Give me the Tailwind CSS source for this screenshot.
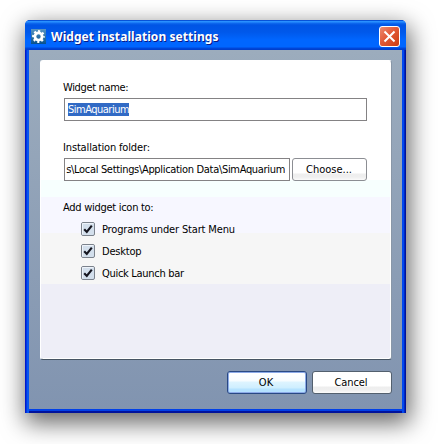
<!DOCTYPE html>
<html lang="en">
<head>
<meta charset="utf-8">
<title>Widget installation settings</title>
<script src="https://cdn.jsdelivr.net/npm/@tailwindcss/browser@4"></script>
</head>
<body class="bg-white w-[444px] h-[444px] overflow-hidden pl-[25px] pt-[20px] font-['DejaVu_Sans_Condensed','DejaVu_Sans',sans-serif] text-[11px] leading-[14px] text-black">
<main class="w-[381px] h-[393px] flex flex-col rounded-t-[5px] bg-[#0846e6] shadow-[2px_8px_23px_2px_rgba(0,0,0,0.6)]">
  <header class="h-[30px] shrink-0 flex items-center rounded-t-[5px] pl-[6px] pr-[6px] bg-[linear-gradient(180deg,#0753d8_0,#0753d8_1px,#2990ff_1px,#2990ff_2px,#106cf0_3px,#0055e5_5px,#0058ea_12px,#0066ff_20px,#0066ff_27px,#0048dc_28px,#003cc8_30px)]">
    <svg class="w-[15px] h-[15px] shrink-0 mt-[2px]" viewBox="0 0 15 15">
      <defs><linearGradient id="ic" x1="0" y1="0" x2="0" y2="1"><stop offset="0" stop-color="#5794c2"/><stop offset="1" stop-color="#07518c"/></linearGradient></defs>
      <rect width="15" height="15" fill="url(#ic)"/>
      <circle cx="7.5" cy="7.5" r="3.6" fill="none" stroke="#fff" stroke-width="2.8"/>
      <circle cx="7.5" cy="7.5" r="5.4" fill="none" stroke="#fff" stroke-width="2" stroke-dasharray="2.1 2.141" stroke-dashoffset="1.05"/>
    </svg>
    <h1 class="ml-[5px] mt-[4px] w-[200px] whitespace-nowrap font-['Noto_Sans','Open_Sans',sans-serif] font-bold text-[12px] leading-[18px] tracking-[0.06px] text-white [text-shadow:1px_1px_0_#0a1883]">Widget installation settings</h1>
    <button class="ml-auto mt-[3px] w-[21px] h-[21px] rounded-[3px] border border-white bg-[linear-gradient(135deg,#ec8a70,#e25a38_45%,#cc3c10)]" aria-label="Close">
      <svg class="w-[19px] h-[19px]" viewBox="0 0 19 19"><path d="M5.2 5.2 13.8 13.8M13.8 5.2 5.2 13.8" stroke="#fff" stroke-width="2" stroke-linecap="square"/></svg>
    </button>
  </header>
  <div class="h-[363px] px-[4px] pb-[4px] bg-[linear-gradient(90deg,#0018ce_0,#0018ce_1px,#0038e0_1px,#0038e0_2px,#0855f0_2px,#0855f0_4px,transparent_4px,transparent_377px,#0048f0_377px,#0048f0_379px,#0028c0_379px,#0028c0_380px,#00129c_380px)]">
    <div class="h-[359px] flex flex-col pl-[11px] pr-[10px] pt-[10px] bg-[linear-gradient(180deg,#9cacbd,#8194b0)] shadow-[0_2px_0_#0040e8,0_4px_0_#00129c]">
      <section class="h-[300px] shrink-0 rounded-[3px] border border-t-white border-l-white border-r-[#8997a8] border-b-[#465463] pl-[22px] pr-[24px] bg-[linear-gradient(180deg,#fff_0,#fff_119px,#f7fffe_119px,#f7fffe_136px,#f7f7ff_136px,#f7f7ff_172px,#f6f6f6_172px,#f6f6f6_223px,#eeeef7_223px)] shadow-[inset_-1px_-1px_0_#fff]">
        <label class="block pt-[20px] h-[37px] tracking-[-0.34px]">Widget name:</label>
        <div class="ml-px w-[303px] h-[23px] border border-[#848284] bg-white flex items-center pl-[3px]"><span class="bg-[#316ac5] text-white h-[13px] leading-[14px] w-[61px] whitespace-nowrap tracking-[-0.5px]">SimAquarium</span></div>
        <label class="block pt-[20px] h-[37px] tracking-[-0.15px]">Installation folder:</label>
        <div class="ml-px flex gap-[2px]">
          <div class="w-[226px] h-[23px] border border-[#848284] bg-white flex items-center pl-px pr-[4px]"><div class="flex-1 min-w-0 flex justify-end overflow-hidden whitespace-nowrap pt-px"><span class="tracking-[-0.32px]">s\Local Settings\Application Data\SimAquarium</span></div></div>
          <button class="w-[75px] h-[23px] rounded-[3px] border border-[#8c8e93] bg-[linear-gradient(180deg,#fff_0,#fff_14px,#eee_15px,#efefef_18px,#fbfbfb_21px)] pr-px pt-px">Choose...</button>
        </div>
        <p class="pt-[20px] h-[38px] tracking-[-0.28px]">Add widget icon to:</p>
        <ul class="pl-[18px] flex flex-col">
          <li class="h-[22px] flex items-center gap-[7px]"><svg class="w-[14px] h-[14px] shrink-0 mt-[-3px]" viewBox="0 0 14 14"><use href="#chk"/></svg><span class="mt-[-1px] whitespace-nowrap tracking-[-0.15px]">Programs under Start Menu</span></li>
          <li class="h-[22px] flex items-center gap-[7px]"><svg class="w-[14px] h-[14px] shrink-0 mt-[-3px]" viewBox="0 0 14 14"><use href="#chk"/></svg><span class="mt-[-1px] tracking-[-0.2px]">Desktop</span></li>
          <li class="h-[22px] flex items-center gap-[7px]"><svg class="w-[14px] h-[14px] shrink-0 mt-[-3px]" viewBox="0 0 14 14"><use href="#chk"/></svg><span class="mt-[-1px] tracking-[-0.3px]">Quick Launch bar</span></li>
        </ul>
      </section>
      <footer class="flex justify-end gap-[5px] pt-[11px]">
        <button class="w-[80px] h-[23px] rounded-[3px] border border-[#294984] bg-[linear-gradient(180deg,#fff_0,#f7fcff_9px,#def4ff_10px,#ceeeff_16px,#b5e2ff_17px,#b5e2ff_21px)] shadow-[inset_0_0_0_1px_#8caae8] pr-[2px] pt-px">OK</button>
        <button class="w-[80px] h-[23px] rounded-[3px] border border-[#53606e] bg-[linear-gradient(180deg,#fff_0,#fff_14px,#eee_15px,#efefef_18px,#fbfbfb_21px)] pr-[2px] pt-px tracking-[-0.1px]">Cancel</button>
      </footer>
    </div>
  </div>
</main>
<svg class="hidden">
  <symbol id="chk" viewBox="0 0 14 14">
    <rect x=".5" y=".5" width="13" height="13" rx="1.5" fill="#d3dfec" stroke="#7b828c"/>
    <path d="M1.5 12.5V1.5H12.5" fill="none" stroke="#eef3fa"/>
    <path d="M3.2 7.2 5.8 10 10.8 3.6" fill="none" stroke="#15151f" stroke-width="2.1"/>
  </symbol>
</svg>
</body>
</html>
